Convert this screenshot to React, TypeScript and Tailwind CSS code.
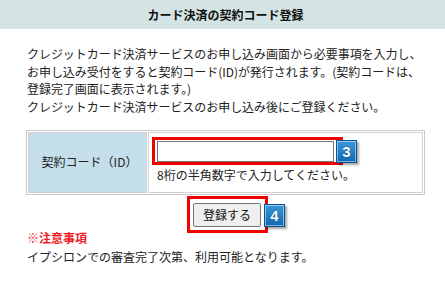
import type { ReactNode } from "react";

function StepBadge({ children, className }: { children: ReactNode; className: string }) {
  return (
    <span
      className={
        "absolute flex h-[23px] w-[21px] items-center justify-center border border-[#0b5595] bg-gradient-to-b from-[#3a98da] to-[#0d68b3] text-[15px] font-bold leading-none text-white shadow-[inset_0_0_0_1px_rgba(255,255,255,0.45),2px_2px_2px_rgba(0,0,0,0.35)] " +
        className
      }
      style={{ fontFamily: '"Liberation Sans", Arial, sans-serif', textShadow: "0 0 1px #06335c" }}
    >
      {children}
    </span>
  );
}

export default function App() {
  return (
    <div
      className="min-h-[289px] w-[445px] bg-white text-[12px] text-[#222]"
      style={{ fontFamily: '"Noto Sans CJK JP", "Noto Sans", sans-serif' }}
    >
      <div className="flex h-[29px] items-center justify-center bg-[#d4e3e3] pl-[6px] font-bold text-[#111]">
        カード決済の契約コード登録
      </div>

      <div className="pl-[26px] pr-[20px]">
        <p className="mt-[16px] whitespace-nowrap pl-px leading-[17.7px] tracking-[-0.05px]">
          クレジットカード決済サービスのお申し込み画面から必要事項を入力し、
          <br />
          お申し込み受付をすると契約コード(ID)が発行されます。(契約コードは、
          <br />
          登録完了画面に表示されます。)
          <br />
          クレジットカード決済サービスのお申し込み後にご登録ください。
        </p>

        <div className="mt-[14px] flex gap-px border border-[#c9c9c9] p-px">
          <div className="flex w-[119px] items-center justify-center border border-[#d2d2d2] bg-[#c4dfea] pl-[4px]">
            契約コード（ID）
          </div>
          <div className="flex-1 border border-[#d2d2d2] pb-[8px] pl-[8px] pt-[8px]">
            <div className="relative w-[177px]">
              <span className="absolute -bottom-[3px] -left-[5px] -right-[9px] -top-[4px] border-[3px] border-[#f00000]" />
              <input
                type="text"
                className="relative block h-[21px] w-[177px] border border-[#767676] bg-white px-1 outline-none"
              />
              <StepBadge className="-top-px left-[179px]">3</StepBadge>
            </div>
            <div className="mt-[4px] leading-[18px]">8桁の半角数字で入力してください。</div>
          </div>
        </div>

        <div className="mt-[8px] flex justify-center pl-[3px]">
          <div className="relative">
            <span className="absolute -bottom-[6px] -left-[6px] -right-[7px] -top-[7px] border-[3px] border-[#f00000]" />
            <button
              type="button"
              className="relative h-[24px] w-[68px] rounded-[2px] border border-[#767676] bg-[#efefef] text-[12px] text-[#111]"
            >
              登録する
            </button>
            <StepBadge className="left-[71px] top-[1px]">4</StepBadge>
          </div>
        </div>

        <div className="mt-[2px] pl-px leading-[18px]">
          <div className="font-bold text-[#ee1c25]">※注意事項</div>
          <div className="mt-px">イプシロンでの審査完了次第、利用可能となります。</div>
        </div>
      </div>
    </div>
  );
}
